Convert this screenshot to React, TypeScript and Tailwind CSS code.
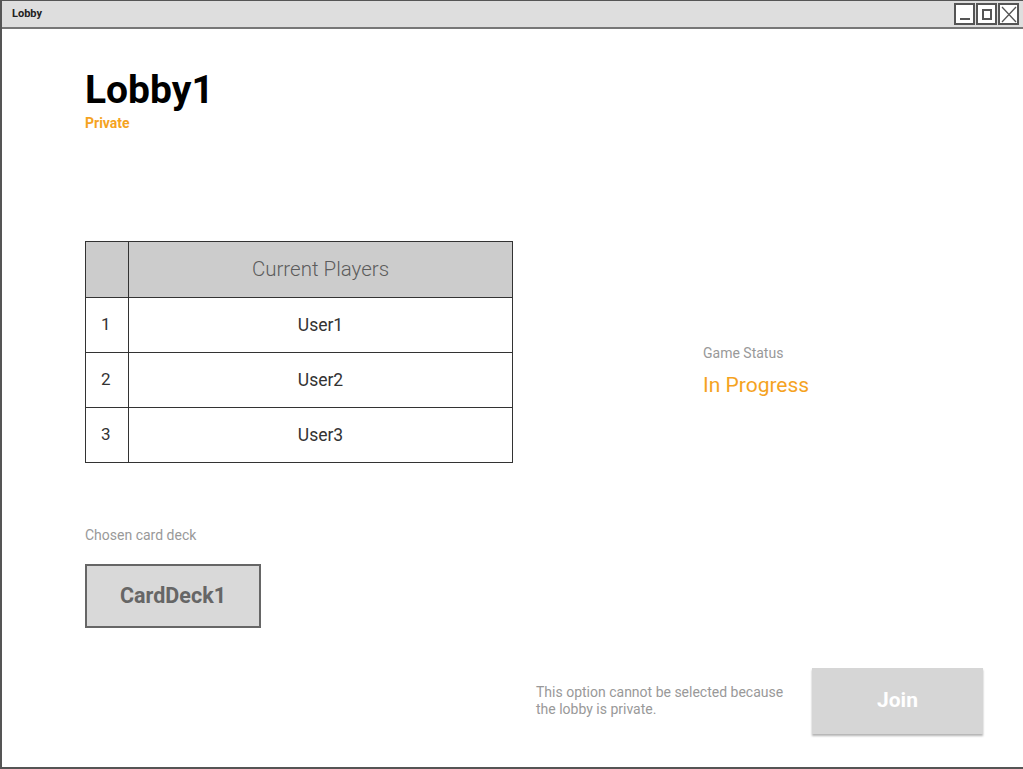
import React from "react";

const players = ["User1", "User2", "User3"];

function WinButton({ children }: { children: React.ReactNode }) {
    return (
        <div className="flex h-[22px] w-[21px] items-center justify-center border-2 border-[#555] bg-white">
            {children}
        </div>
    );
}

export default function App() {
    return (
        <div className="flex h-[769px] w-[1023px] flex-col overflow-hidden border-t border-b-2 border-l-2 border-[#555] bg-white font-['Roboto',sans-serif]">
            {/* title bar */}
            <div className="flex h-[28px] shrink-0 items-center justify-between border-b-2 border-[#777] bg-[#dedede] pl-[10px] pr-[4px]">
                <span className="text-[11px] font-bold text-[#222]">Lobby</span>
                <div className="flex gap-[1px]">
                    <WinButton>
                        <div className="mt-[10px] h-[2px] w-[10px] bg-[#555]" />
                    </WinButton>
                    <WinButton>
                        <div className="h-[11px] w-[10px] border-2 border-[#555]" />
                    </WinButton>
                    <WinButton>
                        <svg width="16" height="17" viewBox="0 0 16 17" fill="none" stroke="#555" strokeWidth="1.3">
                            <path d="M1 1 15 16M15 1 1 16" />
                        </svg>
                    </WinButton>
                </div>
            </div>

            <div className="flex flex-1 flex-col pl-[83px]">
                <h1 className="mt-[38px] text-[39px] leading-[46px] font-bold text-black">Lobby1</h1>
                <div className="text-[14px] font-bold text-[#f5a31f]">Private</div>

                <div className="mt-[107px] flex">
                    <div className="w-[428px] border border-[#333]">
                        <div className="flex h-[55px] bg-[#cccccc]">
                            <div className="w-[43px] border-r border-[#333]" />
                            <div className="flex flex-1 items-center justify-center text-[20.5px] font-light text-[#5c5c5c]">Current Players</div>
                        </div>
                        {players.map((p, i) => (
                            <div key={p} className="flex h-[55px] border-t border-[#333]">
                                <div className="flex w-[43px] items-center pl-[15px] border-r border-[#333] text-[17px] text-[#333]">{i + 1}</div>
                                <div className="flex flex-1 items-center justify-center text-[17.5px] text-[#333]">{p}</div>
                            </div>
                        ))}
                    </div>

                    <div className="ml-[190px] mt-[103px]">
                        <div className="text-[14px] leading-[18px] text-[#999]">Game Status</div>
                        <div className="mt-[10px] text-[21px] leading-[26px] text-[#f5a31f]">In Progress</div>
                    </div>
                </div>

                <div className="mt-[62px] text-[14px] text-[#999]">Chosen card deck</div>
                <div className="mt-[18px] flex h-[64px] w-[176px] items-center justify-center border-2 border-[#666] bg-[#d9d9d9] text-[21.5px] font-bold text-[#666]">
                    CardDeck1
                </div>

                <div className="mt-[40px] flex items-center justify-end pr-[40px]">
                    <div className="mr-[24px] w-[252px] text-[14px] leading-[17px] text-[#999]">
                        This option cannot be selected because the lobby is private.
                    </div>
                    <button type="button" className="flex h-[66px] w-[171px] items-center justify-center bg-[#d6d6d6] text-[21px] font-bold text-white shadow-[0_2px_2px_rgba(0,0,0,0.3)]">
                        Join
                    </button>
                </div>
            </div>
        </div>
    );
}
